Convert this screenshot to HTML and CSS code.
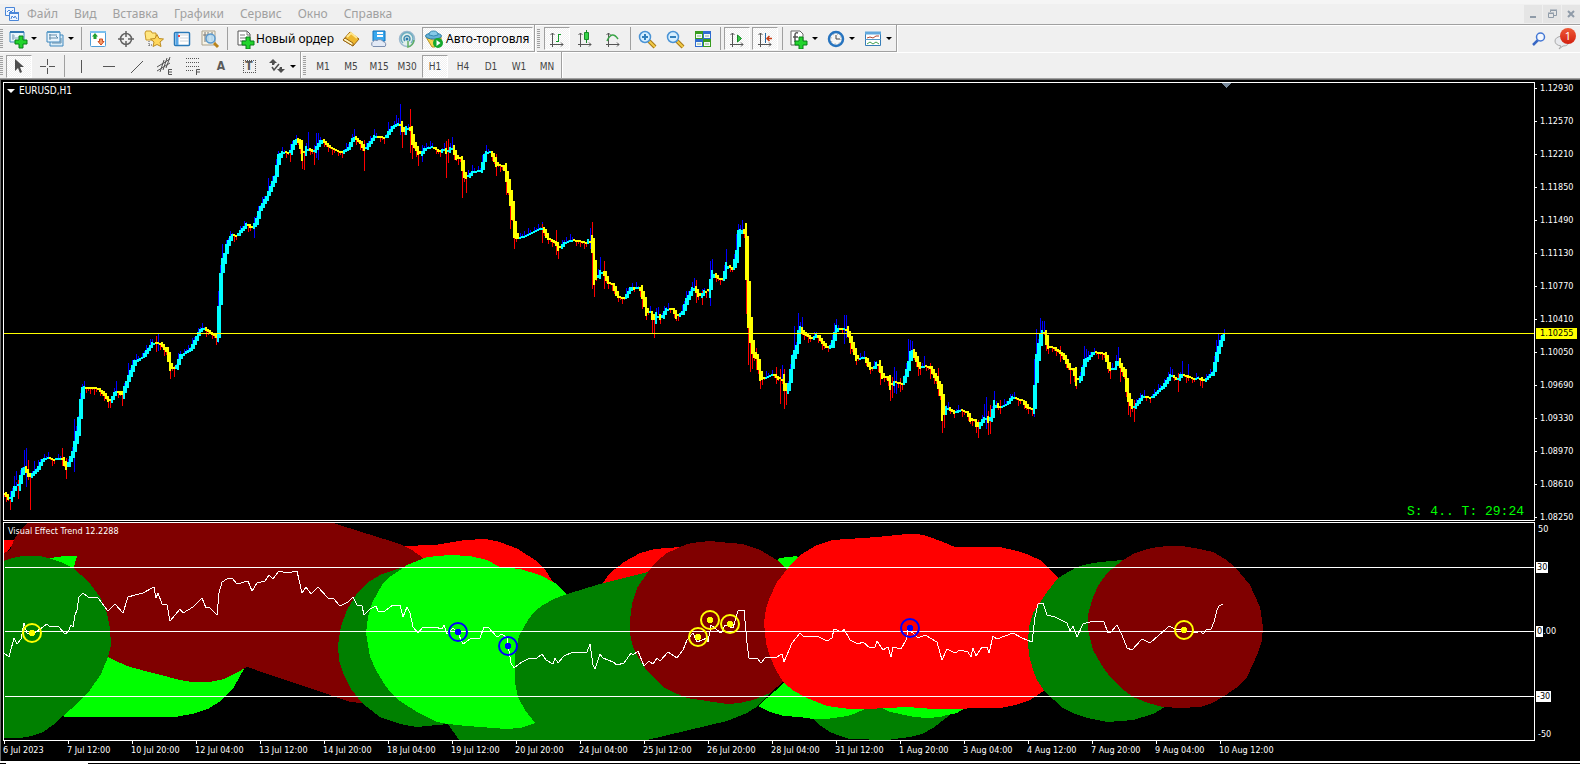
FILE: index.html
```html
<!DOCTYPE html>
<html lang="ru">
<head>
<meta charset="utf-8">
<title>EURUSD,H1</title>
<link rel="stylesheet" href="styles.css">
</head>
<body>
<header class="menubar">
  <svg class="app-icon" width="16" height="16" viewBox="0 0 16 16" fill="#eef5ff" stroke="#4a86d8"><path d="M1.500 3.500V1.500H10.500V9.500H1.500Z"/><path d="M3 6l2-2 2 2 2-2" fill="none"/><path d="M5.500 6.500H14.500V14.500H5.500Z"/><path d="M5 7h10" stroke-width="2"/><path d="M7 13l1-3 2 2 1-2 2 3" fill="none"/></svg>
  <nav class="menu">
    <a href="#">Файл</a><a href="#">Вид</a><a href="#">Вставка</a><a href="#">Графики</a><a href="#">Сервис</a><a href="#">Окно</a><a href="#">Справка</a>
  </nav>
  <div class="window-controls">
    <button aria-label="Свернуть"><svg width="12" height="12" viewBox="0 0 12 12"><path d="M3 9h6" stroke="#8f9ba8" stroke-width="2"/></svg></button>
    <button aria-label="Восстановить"><svg width="12" height="12" viewBox="0 0 12 12" fill="none" stroke="#8f9ba8"><path d="M4.500 4V2.500H10.500V7.500H8M4 2h7M2.500 5.500H7.500V9.500H2.500ZM2 5h6"/></svg></button>
    <button aria-label="Закрыть"><svg width="12" height="12" viewBox="0 0 12 12"><path d="M3 3l6 6M9 3l-6 6" stroke="#8f9ba8" stroke-width="2"/></svg></button>
  </div>
</header>

<div class="toolbar-row">
  <div class="toolbar">
    <span class="grip"></span>
    <button class="tool split" aria-label="Новый график"><svg width="20" height="20" viewBox="0 0 20 20"><path d="M2 3h14v10H2z" fill="#e9f5fd" stroke="#3f87bd"/><path d="M2 3h14" stroke="#3177b1" stroke-width="2"/><path d="M5 5v6M4 7h3M4 9h10" stroke="#8ba8bd"/><path d="M11 7h4v4h4v4h-4v4h-4v-4H7v-4h4z" fill="#22d42c" stroke="#087f18"/></svg><i class="caret"></i></button>
    <button class="tool split" aria-label="Профили"><svg width="20" height="20" viewBox="0 0 20 20"><path d="M5 6h13v11H5z" fill="#d8ecf8" stroke="#3f87bd"/><path d="M2 3h13v10H2z" fill="#e9f5fd" stroke="#3f87bd"/><path d="M2 3h13" stroke="#5e9fca" stroke-width="2"/><path d="M5 5v6M4 6h8M4 9h9l-2-2M16 9v5H7" fill="none" stroke="#628ba8"/></svg><i class="caret"></i></button>
    <span class="sep"></span>
    <button class="tool" aria-label="Обзор рынка"><svg width="20" height="20" viewBox="0 0 20 20"><rect x="2.500" y="2.500" width="15" height="15" rx="1" fill="#fff" stroke="#4f9dd8"/><path d="M2 3h16" stroke="#7ac0ee" stroke-width="2"/><path d="M7 4l3 3.500H8.500V10h-3V7.500H4z" fill="#20a030"/><path d="M11.500 10h3v2.500H16L13 16l-3-3.500h1.500z" fill="#f39b68" stroke="#ce4b20"/></svg></button>
    <button class="tool" aria-label="Окно данных"><svg width="20" height="20" viewBox="0 0 20 20" fill="none" stroke="#626262"><circle cx="10" cy="10" r="5.500" stroke-width="1.500"/><path d="M10 2v6M10 12v6M2 10h6M12 10h6" stroke-width="1.500"/></svg></button>
    <button class="tool" aria-label="Навигатор"><svg width="20" height="20" viewBox="0 0 20 20"><path d="M1 4l1-2h5l1 2h4v7H2z" fill="#ffe680" stroke="#c99726"/><path d="M5 12v6M5 16h4" stroke="#555" stroke-dasharray="1 1"/><path d="M13 5.500l2 4 4.500.500-3.500 3 1 4.500-4-2-4 2 1-4.500-3.500-3 4.500-.500z" fill="#ffd75d" stroke="#bd8c21"/></svg></button>
    <button class="tool" aria-label="Терминал"><svg width="20" height="20" viewBox="0 0 20 20"><rect x="2.500" y="3.500" width="15" height="13" rx="1" fill="#fff" stroke="#2879b9" stroke-width="1.500"/><path d="M5 4v12" stroke="#57a5e5" stroke-width="3"/><path d="M8 6h9M8 9h9M8 12h9" stroke="#cbd4dc"/><path d="M6 7h2" stroke="#e44" stroke-width="2"/></svg></button>
    <button class="tool" aria-label="Тестер стратегий"><svg width="20" height="20" viewBox="0 0 20 20"><path d="M2 2h13v14H2z" fill="#f7f3e5" stroke="#aaa18b"/><path d="M5 3v10M8 3v9M12 3v9M3 6h9" stroke="#777"/><path d="M14 14l4 4" stroke="#b9841c" stroke-width="3"/><circle cx="10.500" cy="9.500" r="4.500" fill="#b9ddf5" fill-opacity=".85" stroke="#5898cd" stroke-width="1.500"/></svg></button>
    <span class="sep"></span>
    <button class="tool wide order"><svg width="20" height="20" viewBox="0 0 20 20"><path d="M3 2h9l3 3v11H3z" fill="#fff" stroke="#555"/><path d="M12 2v4h3M5 6h5M5 9h6M5 12h5" stroke="#777" fill="none"/><path d="M11 8h4v4h4v4h-4v4h-4v-4H7v-4h4z" fill="#22d42c" stroke="#087f18"/></svg><span>Новый ордер</span></button>
    <button class="tool" aria-label="MetaEditor"><svg width="20" height="20" viewBox="0 0 20 20"><path d="M2 11l7-8 9 7-6 7z" fill="#edb72e" stroke="#9a6412"/><path d="M2 11l10 6v-3L4 9z" fill="#fff4bc" stroke="#9a6412"/><path d="M6 8l4-4 6 5" stroke="#ffe78e" stroke-width="2" fill="none"/></svg></button>
    <button class="tool" aria-label="Сигналы"><svg width="20" height="20" viewBox="0 0 20 20"><path d="M4 2h12v10H4z" fill="#38a8ee" stroke="#1172bd"/><path d="M8 4h6M8 7h6" stroke="#fff" stroke-width="2"/><path d="M4 17.500a3 3 0 0 1 0-5 3 3 0 0 1 4-1 4 4 0 0 1 6 1 3 3 0 0 1 2 5z" fill="#e3eaf6" stroke="#7a8dae"/></svg></button>
    <button class="tool" aria-label="Маркет"><svg width="20" height="20" viewBox="0 0 20 20" fill="none" stroke-width="1.500"><circle cx="10" cy="10" r="7.500" fill="#e2efec" stroke="#9cb9cf"/><path d="M6 14a6 6 0 1 1 8 0" stroke="#6faec0"/><path d="M8 12a3 3 0 1 1 4 0" stroke="#428db0"/><circle cx="10" cy="10" r="1.500" fill="#2679ad"/><path d="M11 12v6q5-1 6-7" stroke="#61af63"/></svg></button>
    <button class="tool wide auto pressed"><svg width="20" height="20" viewBox="0 0 20 20"><path d="M2 8l7 3 8-3v3l-6 7H8z" fill="#f5d551" stroke="#b79527"/><ellipse cx="9.500" cy="7" rx="8" ry="3" fill="#65b2d7" stroke="#2e7ca5"/><path d="M5 6q0-4 4.500-4T14 6q-4 2-9 0" fill="#86cae8" stroke="#398bb2"/><circle cx="14" cy="14" r="5" fill="#14a82d"/><path d="M12.500 11l4 3-4 3z" fill="#fff"/></svg><span>Авто-торговля</span></button>
  </div>
  <div class="toolbar">
    <span class="grip"></span>
    <button class="tool pressed" aria-label="Бары"><svg width="20" height="20" viewBox="0 0 20 20" fill="none" stroke="#555"><path d="M5.500 4v14M3 15.500h13M3.500 6l2-2 2 2M14 13.500l2 2-2 2"/><path d="M11.500 5v8M9 12.500h2M12 5.500h2" stroke="#159c2c"/></svg></button>
    <button class="tool" aria-label="Свечи"><svg width="20" height="20" viewBox="0 0 20 20" fill="none" stroke="#555"><path d="M5.500 4v14M3 15.500h13M3.500 6l2-2 2 2M14 13.500l2 2-2 2"/><path d="M11.500 1v13" stroke="#188b29"/><path d="M9.500 3.500h4v7h-4z" fill="#36d348" stroke="#188b29"/></svg></button>
    <button class="tool" aria-label="Линия"><svg width="20" height="20" viewBox="0 0 20 20" fill="none" stroke="#555"><path d="M5.500 4v14M3 15.500h13M3.500 6l2-2 2 2M14 13.500l2 2-2 2"/><path d="M4 12Q9 1 15 10" stroke="#39a447" stroke-width="1.500"/></svg></button>
    <span class="sep"></span>
    <button class="tool" aria-label="Увеличить"><svg width="20" height="20" viewBox="0 0 20 20"><path d="M12 12l6 6" stroke="#a97817" stroke-width="4"/><path d="M12 12l6 6" stroke="#f1cc48" stroke-width="2"/><circle cx="8" cy="8" r="5.500" fill="#d6efff" stroke="#4a93d5" stroke-width="1.500"/><path d="M5 8h6M8 5v6" stroke="#327fbc" stroke-width="2"/></svg></button>
    <button class="tool" aria-label="Уменьшить"><svg width="20" height="20" viewBox="0 0 20 20"><path d="M12 12l6 6" stroke="#a97817" stroke-width="4"/><path d="M12 12l6 6" stroke="#f1cc48" stroke-width="2"/><circle cx="8" cy="8" r="5.500" fill="#d6efff" stroke="#4a93d5" stroke-width="1.500"/><path d="M5 8h6" stroke="#327fbc" stroke-width="2"/></svg></button>
    <button class="tool" aria-label="Упорядочить окна"><svg width="20" height="20" viewBox="0 0 20 20"><path d="M2 2h8v8H2zM10 10h8v8h-8z" fill="#389c1f"/><path d="M10 2h8v8h-8zM2 10h8v8H2z" fill="#2f6cd0"/><path d="M3 5h6v4H3zM11 5h6v4h-6zM3 13h6v4H3zM11 13h6v4h-6z" fill="#f4faf4"/><path d="M4 7h4M12 7h4M4 15h4M12 15h4" stroke="#8cae9a"/></svg></button>
    <span class="sep"></span>
    <button class="tool pressed" aria-label="Автопрокрутка"><svg width="20" height="20" viewBox="0 0 20 20" fill="none" stroke="#555"><path d="M5.500 4v14M3 15.500h13M3.500 6l2-2 2 2M14 13.500l2 2-2 2"/><path d="M10.500 6l4 3.500-4 3.500z" fill="#34cc43" stroke="#168526"/></svg></button>
    <button class="tool pressed" aria-label="Сдвиг графика"><svg width="20" height="20" viewBox="0 0 20 20" fill="none" stroke="#555"><path d="M5.500 4v14M3 15.500h13M3.500 6l2-2 2 2M14 13.500l2 2-2 2"/><path d="M10.500 4v10" stroke="#246ba5"/><path d="M17 9.500h-5M14.500 7l-2.500 2.500 2.500 2.500" stroke="#c73d16" stroke-width="1.500"/></svg></button>
    <span class="sep"></span>
    <button class="tool split" aria-label="Индикаторы"><svg width="20" height="20" viewBox="0 0 20 20"><path d="M2 2h9l3 3v11H2z" fill="#fff" stroke="#666"/><path d="M9 4Q6 3 6 6v7M4 8h5" fill="none" stroke="#555" stroke-width="1.500"/><path d="M10 8h4v4h4v4h-4v4h-4v-4H6v-4h4z" fill="#22d42c" stroke="#087f18"/></svg><i class="caret"></i></button>
    <button class="tool split" aria-label="Периоды"><svg width="20" height="20" viewBox="0 0 20 20"><circle cx="10" cy="10" r="7" fill="#f6f7f7" stroke="#2774bf" stroke-width="2.500"/><path d="M10 6v4h4" fill="none" stroke="#444"/><circle cx="10" cy="10" r="5" fill="none" stroke="#999" stroke-dasharray="1 3"/></svg><i class="caret"></i></button>
    <button class="tool split" aria-label="Шаблоны"><svg width="20" height="20" viewBox="0 0 20 20"><path d="M2.500 3.500h15v13h-15z" fill="#fff" stroke="#367db8"/><path d="M2 4h16" stroke="#61a8dd" stroke-width="3"/><path d="M2 10.500h16" stroke="#5398c9"/><path d="M4 9l3-1 3 1 3-2h3" fill="none" stroke="#b24833"/><path d="M4 15l3-2 3 2 3-2 3 2" fill="none" stroke="#45a050"/></svg><i class="caret"></i></button>
  </div>
  <div class="status-icons">
    <button aria-label="Поиск"><svg width="16" height="16" viewBox="0 0 16 16" fill="none"><path d="M7 9l-5 5" stroke="#3867c4" stroke-width="2.500"/><circle cx="9.500" cy="6" r="4" fill="#f4f8ff" stroke="#4477d4" stroke-width="1.500"/></svg></button>
    <button class="chat" aria-label="Сообщения"><svg width="20" height="18" viewBox="0 0 20 18"><path d="M7 14Q1 13 1 9T8 4q7 0 7 5t-6 5l-4 3z" fill="#e8e9ed" stroke="#aaa"/></svg><b class="badge">1</b></button>
  </div>
</div>

<div class="toolbar-row second">
  <div class="toolbar">
    <span class="grip"></span>
    <button class="tool pressed" aria-label="Курсор"><svg width="20" height="20" viewBox="0 0 20 20"><path d="M6 3v12l3-3 2 5 2-1-2-5h4z" fill="#4e4e4e"/></svg></button>
    <button class="tool" aria-label="Перекрестие"><svg width="20" height="20" viewBox="0 0 20 20" stroke="#555"><path d="M10.500 3v6M10.500 12v6M3 10.500h6M12 10.500h6"/></svg></button>
    <span class="sep"></span>
    <button class="tool" aria-label="Вертикальная линия"><svg width="20" height="20" viewBox="0 0 20 20" stroke="#555"><path d="M10.500 4v13"/></svg></button>
    <button class="tool" aria-label="Горизонтальная линия"><svg width="20" height="20" viewBox="0 0 20 20" stroke="#555"><path d="M4 10.500h12"/></svg></button>
    <button class="tool" aria-label="Трендовая линия"><svg width="20" height="20" viewBox="0 0 20 20" stroke="#555"><path d="M4 17L16 5"/></svg></button>
    <button class="tool" aria-label="Равноудаленный канал"><svg width="20" height="20" viewBox="0 0 20 20" stroke="#555" fill="none"><path d="M2 11L15 3M2 15L15 7M5 16l4-12M8 14l4-12M11 12l4-11"/><path d="M17 13.500h-3.500v5H17M14 16h3"/></svg></button>
    <button class="tool" aria-label="Линии Фибоначчи"><svg width="20" height="20" viewBox="0 0 20 20" stroke="#555" fill="none"><path d="M3 2.500h14M3 6.500h14M3 10.500h14M3 14.500h8" stroke-dasharray="1 1"/><path d="M17 13.500h-3.500V19M14 16h3"/></svg></button>
    <button class="tool glyph">A</button>
    <button class="tool glyph boxed"><span>T</span></button>
    <button class="tool split" aria-label="Стрелки"><svg width="20" height="20" viewBox="0 0 20 20" fill="#4e4e4e"><path d="M6 3l4 4H8L7 9H5V7H2zM14 17l-4-4h2l1-2h2v2h3z"/><path d="M5 11l2 3 5-6" fill="none" stroke="#4e4e4e" stroke-width="1.500"/></svg><i class="caret"></i></button>
  </div>
  <div class="toolbar frames">
    <span class="grip"></span>
    <button class="tool">M1</button><button class="tool">M5</button><button class="tool">M15</button><button class="tool">M30</button><button class="tool pressed">H1</button><button class="tool">H4</button><button class="tool">D1</button><button class="tool">W1</button><button class="tool">MN</button>
  </div>
</div>

<main class="workspace">
  <section class="panel price-panel">
    <div class="plot">
      <svg id="price" class="canvas" aria-label="EURUSD,H1"></svg>
      <div class="caption"><i class="caret"></i>EURUSD,H1</div>
      <div class="spread">S: 4.. T: 29:24</div>
    </div>
    <div class="axis price-axis">
      <span>1.12930</span><span>1.12570</span><span>1.12210</span><span>1.11850</span><span>1.11490</span><span>1.11130</span><span>1.10770</span><span>1.10410</span><span>1.10050</span><span>1.09690</span><span>1.09330</span><span>1.08970</span><span>1.08610</span><span>1.08250</span>
      <b class="current">1.10255</b>
    </div>
  </section>
  <section class="panel trend-panel">
    <div class="plot">
      <svg id="trend" class="canvas" aria-label="Visual Effect Trend"></svg>
      <div class="caption">Visual Effect Trend 12.2288</div>
    </div>
    <div class="axis trend-axis">
      <span>50</span><span><mark>30</mark></span><span><mark>0</mark>.00</span><span><mark>-30</mark></span><span>-50</span>
    </div>
  </section>
  <div class="time-axis">
    <span>6 Jul 2023</span><span>7 Jul 12:00</span><span>10 Jul 20:00</span><span>12 Jul 04:00</span><span>13 Jul 12:00</span><span>14 Jul 20:00</span><span>18 Jul 04:00</span><span>19 Jul 12:00</span><span>20 Jul 20:00</span><span>24 Jul 04:00</span><span>25 Jul 12:00</span><span>26 Jul 20:00</span><span>28 Jul 04:00</span><span>31 Jul 12:00</span><span>1 Aug 20:00</span><span>3 Aug 04:00</span><span>4 Aug 12:00</span><span>7 Aug 20:00</span><span>9 Aug 04:00</span><span>10 Aug 12:00</span>
  </div>
</main>
<footer class="tabs"><span class="tab"></span></footer>
<script src="chart.js"></script>
</body>
</html>
```
FILE: styles.css
```css
* { box-sizing: border-box; }
body { margin: 0; min-height: 100vh; display: flex; flex-direction: column; background: #f0f0f0; font-family: "Noto Sans", "Open Sans", sans-serif; font-size: 12px; color: #000; }
button { border: 0; background: none; padding: 0; margin: 0; font: inherit; color: inherit; }
.menubar { display: flex; align-items: center; height: 25px; padding: 4px 0 0 4px; border-bottom: 1px solid #a0a0a0; background: linear-gradient(#f5f5f5 4px, #f0f0f0 4px); }
.menu { display: flex; gap: 16px; margin-left: 7px; line-height: 18px; }
.menu a { color: #a0a0a0; text-decoration: none; }
.window-controls { display: flex; gap: 1px; margin-left: auto; }
.window-controls button { width: 18px; height: 18px; background: #e5e5e5; display: grid; place-items: center; }
.toolbar-row { display: flex; height: 27px; border-top: 1px solid #fff; }
.toolbar { display: flex; align-items: center; height: 27px; margin-top: -1px; border-right: 1px solid #a0a0a0; border-bottom: 1px solid #a0a0a0; box-shadow: 1px 1px #fff; padding-top: 1px; }
.toolbar + .toolbar { margin-left: 2px; }
.grip { width: 3px; height: 20px; margin-right: 1px; background: repeating-linear-gradient(#a0a0a0 0 1px, #f0f0f0 1px 2px); }
.toolbar + .toolbar .grip { margin-right: 3px; }
.tool { flex: none; display: flex; align-items: center; justify-content: center; width: 28px; height: 23px; color: #444; }
.tool svg { flex: none; }
.pressed { border: 1px solid #fff; border-top-color: #a0a0a0; border-left-color: #a0a0a0; background: conic-gradient(#fff 25%, #f0f0f0 0 50%, #fff 0 75%, #f0f0f0 0) 0 0 / 2px 2px; width: 26px; margin: 0 1px; }
.split { width: 37px; justify-content: flex-start; padding-left: 4px; gap: 3px; }
.caret { width: 0; height: 0; border: 3px solid transparent; border-top-color: #000; border-bottom: 0; }
.sep { align-self: stretch; width: 6px; background: linear-gradient(#a0a0a0, #a0a0a0) 3px 0 / 1px 100% no-repeat; margin: 1px 0; }
.wide { color: #000; justify-content: flex-start; }
.order { width: 107px; padding-left: 5px; gap: 1px; }
.auto { width: 111px; padding-left: 1px; gap: 2px; }
.status-icons { display: flex; align-items: center; gap: 4px; margin-left: auto; padding-right: 3px; }
.status-icons button { display: block; line-height: 0; }
.chat { position: relative; width: 26px; padding-top: 4px; }
.badge { position: absolute; right: 1px; top: 0; width: 16px; height: 16px; border-radius: 8px; background: linear-gradient(#ee5a38, #d32010); color: #fff; font-size: 11px; line-height: 16px; font-weight: 400; }
.second { border-bottom: 1px solid #a0a0a0; }
.second .toolbar { height: 26px; padding-top: 2px; border-bottom: 0; box-shadow: 1px 0 #fff; }
.second .toolbar:first-child .grip { margin-right: 2px; }
.glyph { font-family: "DejaVu Sans Condensed", sans-serif; font-size: 12px; font-weight: 700; color: #5a5a5a; }
.boxed span { width: 13px; height: 13px; line-height: 11px; border: 1px dotted #555; }
.frames { font-family: "DejaVu Sans Condensed", "DejaVu Sans", sans-serif; font-size: 10px; }
.workspace { flex: 1; display: flex; flex-direction: column; background: #000; border-top: 1px solid #696969; border-left: 1px solid #696969; padding: 2px 0 0 2px; color: #fff; font-family: "DejaVu Sans Condensed", "DejaVu Sans", sans-serif; font-size: 9px; line-height: 11px; }
.panel { display: grid; grid-template-columns: 1fr 45px; }
.plot { position: relative; border: 1px solid #fff; }
.canvas { display: block; width: 100%; overflow: hidden; shape-rendering: crispEdges; }
.price-panel .canvas { height: 437px; }
.trend-panel { margin-top: 1px; }
.trend-panel .canvas { height: 217px; }
.caption { position: absolute; left: 4px; top: 3px; display: flex; align-items: center; gap: 4px; }
.price-panel .caption { left: 3px; top: 2px; font-size: 10px; }
.caption .caret { border-width: 4px; border-top-color: #fff; border-bottom: 0; }
.spread { position: absolute; right: 10px; bottom: 1px; color: #0f0; font: 13px/14px "Liberation Mono", monospace; }
.axis { position: relative; }
.price-axis { margin-top: -10px; height: 449px; }
.price-axis span { display: flex; align-items: center; gap: 3px; height: 33px; }
.price-axis span::before { content: ""; width: 2px; height: 1px; background: #fff; }
.current { position: absolute; left: 1px; top: 256px; width: 41px; padding-left: 4px; background: #ff0; color: #000; font-weight: 400; }
.trend-axis { display: grid; grid-template-rows: 13px 63px 65px 65px 11px; align-items: center; padding: 1px 0 0 1px; }
.trend-axis span:first-child, .trend-axis span:last-child { padding-left: 2px; }
mark { display: inline-block; background: #fff; color: #000; padding: 0 1px; }
.time-axis { display: flex; height: 20px; overflow: hidden; }
.time-axis span { flex: none; width: 64px; padding-top: 4px; background: linear-gradient(#fff, #fff) 1px 0 / 1px 3px no-repeat; white-space: nowrap; }
.tabs { height: 3px; background: #000; border-top: 2px solid #fff; padding-left: 6px; }
.tab { display: block; width: 82px; height: 1px; background: #fff; }
```
FILE: chart.js
```js
const NS = 'http://www.w3.org/2000/svg';
function add(parent, name, attrs) {
  const el = document.createElementNS(NS, name);
  for (const key in attrs) el.setAttribute(key, attrs[key]);
  parent.appendChild(el);
  return el;
}
function pairs(text) {
  return text.trim().split(/\s+/).map(p => p.split(',').map(Number));
}

const closes = pairs(`4,493 10,500 16,485 18,488 24,467 30,477 37,470 43,460 48,457.5 53,460 62,458 67,468 73,453 78,430 82,397 84,388 88,388 97,388 103,393 110,402 116,392 120,392 122,397 128,380 135,362 143,357 153,343 160,343 167,351 171,368 176,368 181,356 191,349 200,331 204,328 217,337 218,327 220,297 222,270 227,247 232,235 237,236 247,224 252,228 256,223 260,210 267,197 275,178 279,158 283,152 290,153 296,139 300,143 303,157 307,148 314,152 322,140 330,147 342,153 349,148 354,137 360,142 365,150 375,136 385,138 393,127 400,123 404,133 407,127 411,130 413,142 420,155 425,149 433,147 440,152 444,149 447,153 452,147 457,158 461,158 464,173 467,178 473,172 481,171 486,153 491,152 497,165 504,166 508,183 512,207 515,232 518,238 523,237 535,231 543,228 548,238 556,243 559,249 565,243 573,240 587,243 590,238 593,250 595,277 598,277 601,271 604,273 608,282 613,285 618,297 625,298 632,287 635,289 640,287 644,300 647,313 651,312 654,322 657,314 661,319 667,309 673,309 677,317 683,312 687,300 694,287 700,297 706,290 708,295 713,273 718,278 723,280 727,265 733,269 737,253 739,235 742,230 745,233 747,270 749,313 752,343 754,353 757,358 761,377 764,379 773,374 780,380 782,377 786,392 789,385 793,360 797,347 800,328 804,333 812,339 817,335 823,343 828,348 832,345 837,328 842,330 846,328 850,338 857,359 865,358 871,369 874,368 878,362 883,377 888,377 891,387 894,382 903,384 908,368 912,350 916,358 920,368 924,366 930,367 937,380 942,397 943,415 947,407 955,413 960,410 967,412 971,420 975,420 978,428 983,420 986,417 989,422 992,415 995,403 1000,408 1007,404 1013,397 1023,401 1028,408 1033,409 1035,390 1037,363 1040,343 1042,332 1045,333 1048,347 1053,347 1063,355 1070,368 1074,370 1077,383 1081,377 1085,362 1094,352 1105,354 1110,370 1115,368 1118,360 1125,375 1128,395 1132,407 1134,408 1143,396 1151,398 1163,387 1171,375 1178,380 1182,374 1193,379 1200,378 1204,381 1213,373 1217,355 1221,342 1224,335`);

const upWicks = pairs(`14,476,493 16,471,480 24,450,470 26,448,487 34,461,470 74,419,472 84,381,390 116,381,392 128,363,380 158,334,351 218,291,343 220,265,300 222,244,270 254,217,238 268,178,197 308,132,150 316,133,158 318,133,160 354,129,140 388,122,138 396,115,127 400,104,135 422,145,162 452,137,148 482,155,170 590,228,249 600,257,277 656,308,315 658,307,315 686,291,303 694,278,288 710,261,306 712,259,280 726,249,270 736,234,255 740,225,235 742,220,232 782,365,380 794,326,360 798,313,345 802,317,330 834,323,340 844,315,344 846,315,338 894,367,393 896,371,394 908,339,370 910,340,360 912,341,352 924,356,366 984,404,420 986,397,429 994,391,410 1034,359,417 1036,329,380 1040,318,345 1042,321,333 1044,321,333 1084,346,367 1086,349,362 1118,347,362 1170,367,378 1182,361,376 1188,364,378 1216,340,360 1218,334,352 1224,329,338`);
const downWicks = pairs(`10,500,510 18,480,499 28,460,480 30,477,510 62,448,466 66,458,479 110,400,408 122,396,406 156,336,352 170,360,379 174,366,377 216,335,345 290,152,162 302,150,169 304,155,170 314,149,165 364,140,171 402,122,148 410,109,153 412,138,159 418,150,166 446,141,178 448,139,163 462,160,198 466,175,193 496,154,176 506,170,195 510,195,229 514,220,249 542,224,243 556,230,255 558,245,259 592,222,289 594,260,297 604,261,289 642,290,309 652,311,333 654,320,338 696,280,303 702,291,305 746,229,314 748,280,365 750,320,372 752,340,369 756,348,370 760,370,389 776,367,384 780,369,404 784,369,409 786,390,405 850,335,354 880,361,385 890,380,401 892,377,398 900,378,392 918,360,376 930,363,379 938,368,396 942,400,433 944,410,428 978,420,438 988,411,435 990,405,434 1000,400,414 1048,340,354 1060,346,362 1070,365,384 1076,370,389 1110,365,379 1120,358,382 1128,390,415 1130,400,417 1134,400,422 1178,373,392 1202,377,388`);

const price = document.getElementById('price');
const bars = add(price, 'g', { transform: 'translate(-4,-83)' });
function valueAt(x) {
  let i = 1;
  while (i < closes.length - 1 && closes[i][0] < x) i++;
  const [x0, y0] = closes[i - 1], [x1, y1] = closes[i];
  const t = Math.max(0, Math.min(1, (x - x0) / (x1 - x0)));
  return y0 + (y1 - y0) * t;
}
const bodies = [];
for (let x = 4, n = 0; x <= 1224; x += 2, n++) {
  const before = valueAt(x - 2), after = valueAt(x + 1);
  const rising = after < before;
  const mid = (before + after) / 2;
  const half = Math.max(1, Math.abs(after - before) * 0.75);
  const top = Math.round(mid - half), bottom = Math.round(mid + half);
  const tail = [2, 5, 1, 6, 3, 0, 4][n % 7];
  add(bars, 'rect', { x, y: rising ? top - tail : top, width: 1, height: bottom - top + tail, fill: rising ? '#00f' : '#f00' });
  bodies.push({ x: x - 1, y: top, width: 2, height: bottom - top, fill: rising ? '#0ff' : '#ff0' });
}
for (const [x, a, b] of upWicks) add(bars, 'rect', { x, y: a, width: 1, height: b - a, fill: '#00f' });
for (const [x, a, b] of downWicks) add(bars, 'rect', { x, y: a, width: 1, height: b - a, fill: '#f00' });
for (const body of bodies) add(bars, 'rect', body);
add(price, 'rect', { x: 0, y: 250, width: '100%', height: 1, fill: '#ff0' });
add(bars, 'path', { d: 'M1221 83h11l-5.500 5z', fill: '#778899' });

const trend = document.getElementById('trend');
const layer = add(trend, 'g', { transform: 'translate(-4,-523)' });
const RED = '#f00', LIME = '#0f0', GREEN = '#008000', MAROON = '#800000';
const zones = [
  [RED, '4,540 14,540 12,545 8,551 4,553'],
  [RED, '400,546 435,545 465,540 485,539 500,542 518,549 535,560 546,571 553,582 553,620 400,620'],
  [RED, '602,584 610,573 624,562 640,553 655,549 680,547 700,600 602,600'],
  [LIME, '64,717 175,717 192,714 208,709 222,700 234,687 245,667 240,620 64,620'],
  [MAROON, '4,570 4,553 10,550 14,540 20,530 28,523 333,523 400,544 412,550 423,558 420,650 362,703 350,702 310,688 247,667 236,673 224,679 210,682 192,682 180,680 130,667 118,662 108,657 90,600'],
  [LIME, '50,558 64,556 77,556 73,570 60,570'],
  [GREEN, '4,561 12,558 22,556 40,556 52,559 63,563 73,568 88,581 100,597 107,613 110,628 111,645 108,657 101,674 90,690 78,703 63,716 53,725 43,732 32,736 20,738 4,738'],
  [GREEN, '400,568 380,575 367,583 357,593 347,610 341,626 338,645 339,660 343,673 351,689 362,703 380,717 400,724 417,727 448,724 459,740 560,740 560,600'],
  [LIME, '366,633 368,617 372,603 383,583 391,576 400,570 407,565 427,557 450,555 470,556 487,560 500,567 520,569 540,575 555,583 567,594 570,700 535,723 520,728 507,729 467,726 448,724 437,722 417,712 400,701 390,692 383,682 376,670 370,657'],
  [GREEN, '567,594 600,584 648,572 740,572 790,670 770,693 758,706 747,713 727,721 647,740 545,740 535,723 525,710 518,697 515,683 515,655 519,636 528,620 534,612 543,605 554,599'],
  [GREEN, '813,719 821,726 830,732 840,736 850,739 887,740 910,737 922,734 933,728 950,715 950,690 813,690'],
  [LIME, '777,560 780,558 797,556 810,570 865,709 856,713 847,716 827,719 813,719 800,717 784,716 770,712 758,706 784,683'],
  [LIME, '882,708 890,712 900,714 914,717 927,718 940,717 947,715 957,713 965,708 965,680 882,680'],
  [MAROON, '630,620 632,604 637,588 648,572 656,562 667,553 687,544 699,542 710,541 730,543 743,544 760,550 777,560 788,571 800,600 783,682 770,693 753,700 740,703 727,704 687,698 675,693 663,687 645,668 638,657 633,647 630,634'],
  [RED, '764,623 766,609 770,597 777,582 788,568 800,555 817,545 833,540 877,537 907,534 918,534 927,536 943,542 955,547 1000,547 1017,551 1029,555 1040,560 1058,578 1070,620 1045,690 1030,700 1016,705 1000,708 933,709 907,707 867,709 850,709 827,706 807,698 794,691 783,682 776,670 770,657 766,643'],
  [GREEN, '1028,642 1029,627 1033,613 1047,592 1058,578 1077,567 1088,564 1100,562 1123,560 1165,600 1165,707 1153,714 1133,720 1107,722 1087,718 1075,714 1063,708 1045,692 1037,680 1033,670 1029,655'],
  [MAROON, '1088,630 1088,615 1092,600 1098,586 1107,573 1123,560 1135,553 1147,549 1157,547 1168,546 1182,546 1200,549 1213,552 1225,559 1235,567 1250,585 1260,607 1263,627 1262,640 1258,653 1247,677 1236,688 1223,697 1212,703 1200,707 1180,708 1163,707 1148,703 1133,697 1121,688 1110,677 1101,664 1093,650']
];
for (const [fill, points] of zones) add(layer, 'polygon', { points, fill });

for (const y of [44, 108, 173]) add(trend, 'rect', { x: 1, y, width: '100%', height: 1, fill: '#fff' });

const top2 = add(trend, 'g', { transform: 'translate(-4,-523)' });
const line = pairs(`4,653 9,657 14,638 17,644 21,639 24,623 27,633 32,636 37,631 43,627 47,624 50,627 58,626 65,634 68,632 71,625 73,627 75,615 77,610 79,597 83,593 88,597 98,598 108,611 115,604 123,613 128,597 135,595 143,593 154,587 156,598 158,593 162,604 167,605 170,621 180,609 183,613 193,607 202,598 206,608 209,607 213,611 217,615 219,593 222,582 227,579 232,578 237,584 248,581 252,591 257,583 265,581 269,575 273,579 279,571 287,573 297,571 302,593 306,587 311,594 318,587 328,598 333,598 340,606 348,602 353,597 357,605 362,606 364,615 370,609 376,606 378,611 385,611 393,605 400,605 403,617 407,607 410,613 413,627 418,633 423,627 435,627 442,629 444,625 447,634 453,628 458,633 463,644 470,639 480,638 484,627 488,627 497,637 502,634 507,638 511,663 514,668 522,662 528,659 537,658 542,654 546,660 553,664 555,658 558,663 564,656 573,652 578,653 587,652 590,644 593,665 595,669 600,654 603,658 613,662 617,665 624,663 631,653 633,655 638,651 644,666 649,661 653,664 657,658 660,661 668,652 677,658 683,650 687,640 693,633 697,642 702,640 707,638 708,642 711,625 717,630 721,633 725,625 733,628 738,611 744,610 747,643 749,658 757,658 761,663 765,658 777,657 782,654 784,662 792,643 800,633 803,636 817,636 827,641 832,638 834,629 842,632 844,629 850,640 858,644 863,642 870,648 875,647 877,641 883,650 888,647 891,657 893,647 901,649 906,640 908,630 913,633 918,638 925,635 937,642 942,660 947,649 955,653 960,650 968,652 971,657 973,648 976,656 982,647 987,647 989,653 993,636 997,639 1013,633 1022,638 1032,642 1035,617 1038,604 1043,603 1047,615 1055,617 1067,623 1070,631 1073,626 1077,637 1083,624 1093,621 1104,622 1108,633 1111,632 1117,625 1122,635 1127,648 1132,650 1142,639 1150,643 1158,636 1167,628 1169,626 1175,629 1193,632 1195,633 1200,631 1203,634 1207,629 1211,629 1214,622 1217,610 1219,606 1223,604`);
add(top2, 'polyline', { points: line.map(p => p.join()).join(' '), fill: 'none', stroke: '#fff' });

const signals = [[32, 633, '#ff0'], [698, 637, '#ff0'], [710, 620, '#ff0'], [730, 624, '#ff0'], [1184, 630, '#ff0'], [458, 632, '#00f'], [508, 646, '#00f'], [910, 628, '#00f']];
for (const [cx, cy, color] of signals) {
  add(top2, 'circle', { cx, cy, r: 9, fill: 'none', stroke: color, 'stroke-width': 2, 'shape-rendering': 'auto' });
  add(top2, 'circle', { cx, cy, r: 3, fill: color });
}
```
